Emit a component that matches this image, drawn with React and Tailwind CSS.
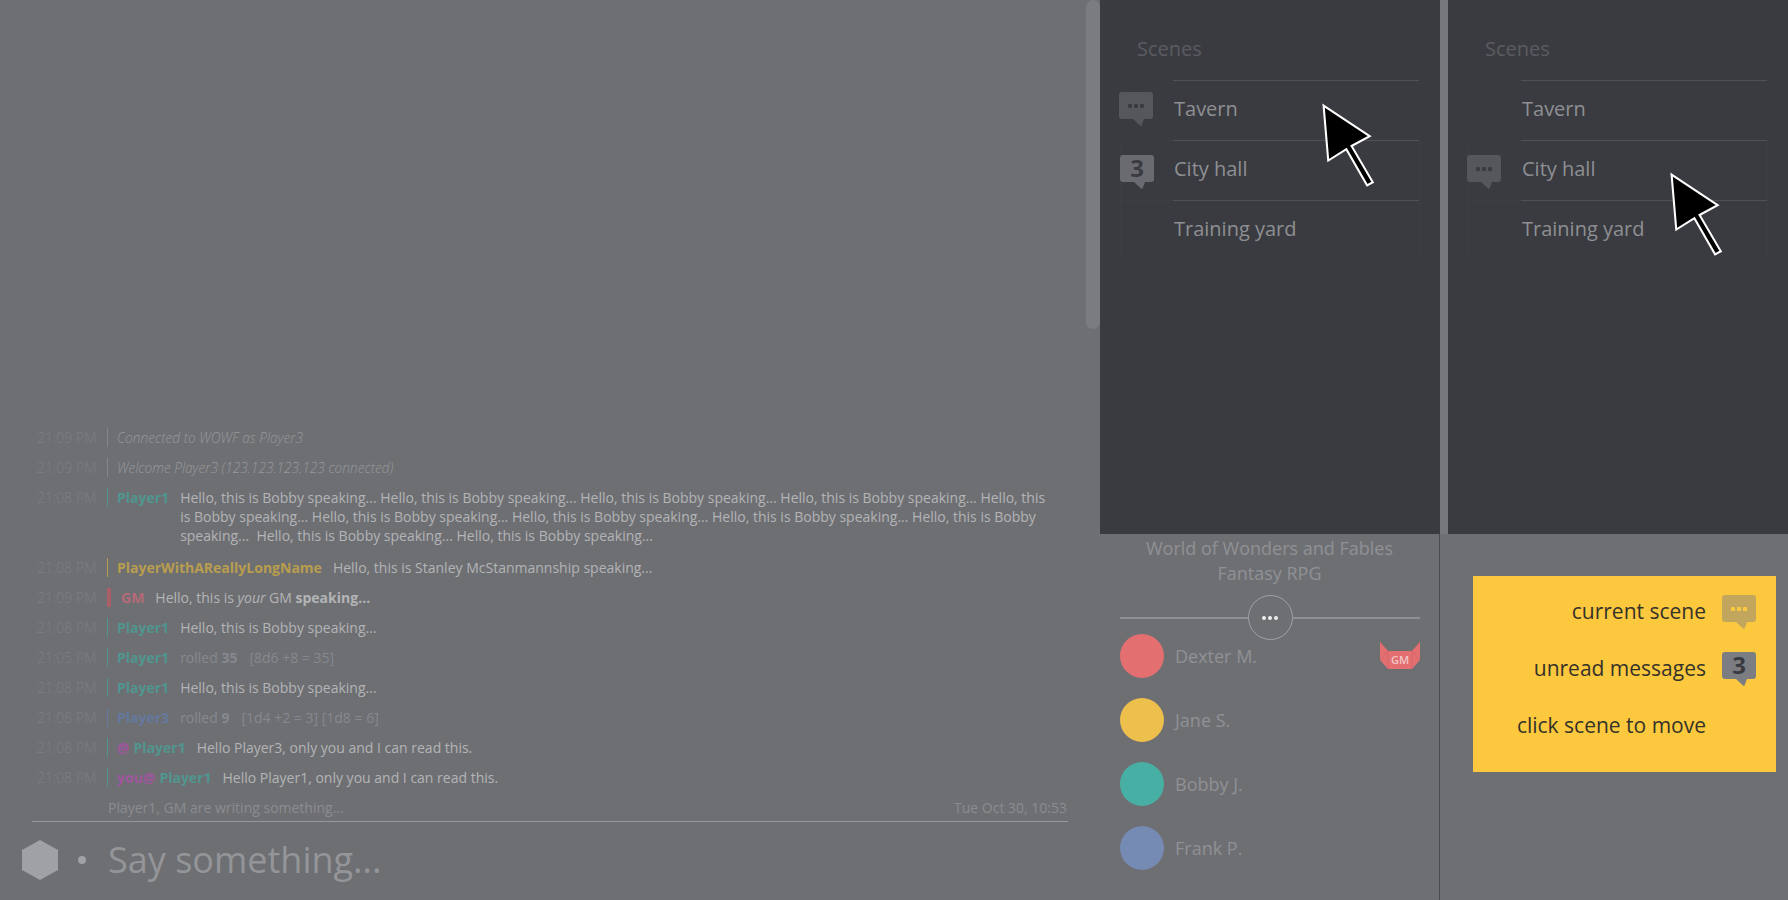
const PHRASE = 'Hello, this is Bobby speaking...'

const chatRows = [
  { time: '21:09 PM', bar: 'bg-[#85868a]', system: 'Connected to WOWF as Player3' },
  { time: '21:09 PM', bar: 'bg-[#85868a]', system: 'Welcome Player3 (123.123.123.123 connected)' },
  { time: '21:08 PM', bar: 'bg-[#4f9690]', name: 'Player1', nameColor: 'text-[#4f9690]', long: true },
  { time: '21:08 PM', bar: 'bg-[#b99d4f]', name: 'PlayerWithAReallyLongName', nameColor: 'text-[#b99d4f]', text: 'Hello, this is Stanley McStanmannship speaking...' },
  { time: '21:09 PM', gm: true },
  { time: '21:08 PM', bar: 'bg-[#4f9690]', name: 'Player1', nameColor: 'text-[#4f9690]', text: PHRASE },
  { time: '21:05 PM', bar: 'bg-[#4f9690]', name: 'Player1', nameColor: 'text-[#4f9690]', roll: '35', detail: '[8d6 +8 = 35]' },
  { time: '21:08 PM', bar: 'bg-[#4f9690]', name: 'Player1', nameColor: 'text-[#4f9690]', text: PHRASE },
  { time: '21:06 PM', bar: 'bg-[#64799e]', name: 'Player3', nameColor: 'text-[#64799e]', roll: '9', detail: '[1d4 +2 = 3] [1d8 = 6]' },
  { time: '21:08 PM', bar: 'bg-[#4f9690]', whisper: '@', name: 'Player1', nameColor: 'text-[#4f9690]', text: 'Hello Player3, only you and I can read this.' },
  { time: '21:08 PM', bar: 'bg-[#4f9690]', whisper: 'you@', name: 'Player1', nameColor: 'text-[#4f9690]', text: 'Hello Player1, only you and I can read this.' },
]

const players = [
  { name: 'Dexter M.', color: 'bg-[#e36f70]', gm: true },
  { name: 'Jane S.', color: 'bg-[#edbf4c]' },
  { name: 'Bobby J.', color: 'bg-[#48afa5]' },
  { name: 'Frank P.', color: 'bg-[#758bb3]' },
]

function Bubble({ fill, dots, children }) {
  return (
    <div className="relative w-[34px] h-[34px]">
      <svg width="34" height="34" viewBox="0 0 34 34" className="block">
        <path d="M3 0H31a3 3 0 0 1 3 3V24a3 3 0 0 1-3 3H25L22.5 33.5Q22 34 21 33.5L14 27H3a3 3 0 0 1-3-3V3a3 3 0 0 1 3-3Z" fill={fill} />
        {dots && (
          <g fill={dots}>
            <rect x="9" y="12" width="4" height="4" rx="1" />
            <rect x="15" y="12" width="4" height="4" rx="1" />
            <rect x="21" y="12" width="4" height="4" rx="1" />
          </g>
        )}
      </svg>
      {children && (
        <span className="absolute left-0 top-[-2px] w-[34px] text-center text-[24px] leading-[30px] font-bold text-[#3a3b40]">{children}</span>
      )}
    </div>
  )
}

function Cursor({ className }) {
  return (
    <svg width="56" height="87" viewBox="0 0 54 84" className={className}>
      <polygon points="1.5,3.5 46,33 28.5,42.5 49,77.5 43.5,80.5 23.5,45.5 6,56.5" fill="#000" stroke="#fff" strokeWidth="2" />
    </svg>
  )
}

function SceneRow({ label, icon, first }) {
  return (
    <div className={`flex h-[60px] ${first ? 'px-px' : 'border-x border-[#3d3e43]'}`}>
      <div className={`w-[52px] shrink-0 pt-[14px] ${first ? '' : 'border-t border-[#3d3e43]'}`}>{icon}</div>
      <div className="flex-1 border-t border-[#505156] pt-[15px] pl-[1px] text-[20px] leading-[26px] text-[#8e8f93]">{label}</div>
    </div>
  )
}

function ScenePanel({ scenes, cursorClass }) {
  return (
    <div className="relative h-[534px] w-[340px] bg-[#3a3b40] pr-[20px] pl-[20px]">
      <div className="h-[80px] pt-[36px] pl-[17px] text-[20px] leading-[26px] text-[#5a5b60]">Scenes</div>
      {scenes.map((s, i) => (
        <SceneRow key={s.label} label={s.label} icon={s.icon} first={i === 0} />
      ))}
      <Cursor className={cursorClass} />
    </div>
  )
}

function ChatRow({ row }) {
  let body
  if (row.system) {
    body = <span className="ml-[9px] italic font-light text-[13.7px] text-[#97989b]">{row.system}</span>
  } else if (row.gm) {
    body = (
      <>
        <span className="ml-[10px] font-bold text-[#b56a78]">GM</span>
        <span className="ml-[11px] text-[#b3b4b6]">Hello, this is <i>your</i> GM <b>speaking...</b></span>
      </>
    )
  } else {
    body = (
      <>
        <span className="ml-[9px] shrink-0 font-bold whitespace-nowrap">
          {row.whisper && <span className="text-[#a1559f] mr-[4px]">{row.whisper}</span>}
          <span className={row.nameColor}>{row.name}</span>
        </span>
        {row.long && (
          <p className="ml-[11px] w-[870px] text-[#b3b4b6]">
            {PHRASE} {PHRASE} {PHRASE} {PHRASE} {PHRASE} {PHRASE} {PHRASE} {PHRASE} {PHRASE}{'\u00a0 '}{PHRASE} {PHRASE}
          </p>
        )}
        {row.text && <span className="ml-[11px] text-[#b3b4b6]">{row.text}</span>}
        {row.roll && (
          <span className="ml-[11px] text-[#85898f]">
            rolled <b>{row.roll}</b>
            <span className="ml-[12px]">{row.detail}</span>
          </span>
        )}
      </>
    )
  }
  return (
    <div className={`flex items-start text-[14px] leading-[19px] ${row.long ? 'mb-[13px]' : 'mb-[11px]'}`}>
      <span className="w-[70px] shrink-0 font-light text-[14px] text-[#7d7e82]">{row.time}</span>
      {row.gm
        ? <span className="w-[4px] h-[19px] shrink-0 bg-[#a85f69]" />
        : <span className={`w-px h-[19px] shrink-0 ${row.bar}`} />}
      {body}
    </div>
  )
}

export default function App() {
  const tavernIcon = <Bubble fill="#56575c" dots="#3a3b40" />
  const unread = <div className="-ml-[1px]"><Bubble fill="#6a6b70">3</Bubble></div>

  return (
    <div className="flex h-[900px] w-[1788px] overflow-hidden bg-[#6e6f73] font-['Open_Sans',sans-serif]">
      <div className="flex w-[1086px] flex-col justify-end pl-[32px] pr-[18px]">
        <div className="pl-[5px]">
          {chatRows.map((row, i) => <ChatRow key={i} row={row} />)}
          <div className="flex justify-between pl-[71px] pr-[1px] text-[14px] leading-[19px] text-[#8b8c90]">
            <span>Player1, GM are writing something...</span>
            <span>Tue Oct 30, 10:53</span>
          </div>
        </div>
        <div className="mt-[4px] flex h-[79px] items-center border-t border-[#97989b] pb-[3px]">
          <svg width="36" height="40" viewBox="0 0 36 40" className="-ml-[10px] shrink-0">
            <polygon points="18,0 36,10 36,30 18,40 0,30 0,10" fill="#a0a1a4" />
          </svg>
          <span className="ml-[20px] h-[8px] w-[8px] shrink-0 rounded-full bg-[#a0a1a4]" />
          <span className="ml-[22px] text-[36px] leading-[48px] text-[#949598]">Say something...</span>
        </div>
      </div>

      <div className="w-[14px] shrink-0">
        <div className="h-[329px] rounded-lg bg-[#7b7c80]" />
      </div>

      <div className="w-[340px] shrink-0">
        <ScenePanel
          cursorClass="absolute left-[222px] top-[102px]"
          scenes={[
            { label: 'Tavern', icon: <div className="-ml-[2px] -mt-[2px]">{tavernIcon}</div> },
            { label: 'City hall', icon: unread },
            { label: 'Training yard' },
          ]}
        />
        <div className="h-[366px] border-r border-[#4a4b50]">
          <div className="pt-[2px] text-center text-[18px] leading-[25px] text-[#909195]">
            <div>World of Wonders and Fables</div>
            <div>Fantasy RPG</div>
          </div>
          <div className="ml-[20px] mr-[19px] mt-[9px] flex items-center">
            <div className="h-[2px] flex-1 bg-[#8f9093]" />
            <div className="flex h-[45px] w-[45px] items-center justify-center gap-[2px] rounded-full border border-[#a0a1a3]">
              <span className="h-[4px] w-[4px] rounded-full bg-[#eeeeee]" />
              <span className="h-[4px] w-[4px] rounded-full bg-[#eeeeee]" />
              <span className="h-[4px] w-[4px] rounded-full bg-[#eeeeee]" />
            </div>
            <div className="h-[2px] flex-1 bg-[#8f9093]" />
          </div>
          <div className="ml-[20px] mr-[19px] -mt-[6px] flex flex-col gap-[20px]">
            {players.map(p => (
              <div key={p.name} className="flex h-[44px] items-center">
                <span className={`h-[44px] w-[44px] rounded-full ${p.color}`} />
                <span className="ml-[11px] flex-1 text-[18px] text-[#909195]">{p.name}</span>
                {p.gm && (
                  <div className="relative -mt-[2px] h-[27px] w-[40px]">
                    <svg width="40" height="27" viewBox="0 0 40 27" className="block">
                      <polygon points="0,0 8,9 32,9 40,0 40,18 32,27 8,27 0,18" fill="#e36f70" />
                      <path d="M0 0L8 9V27M40 0L32 9V27M0 18L8 9M40 18L32 9" fill="none" stroke="#c96365" strokeWidth="0.6" />
                    </svg>
                    <span className="absolute left-0 top-[9px] w-[40px] text-center text-[11px] leading-[18px] font-semibold text-[#f3c6c6]">GM</span>
                  </div>
                )}
              </div>
            ))}
          </div>
        </div>
      </div>

      <div className="w-[8px] shrink-0">
        <div className="h-[534px] bg-[#77787c]" />
      </div>

      <div className="w-[340px] shrink-0">
        <ScenePanel
          cursorClass="absolute left-[222px] top-[171px]"
          scenes={[
            { label: 'Tavern', icon: null },
            { label: 'City hall', icon: <div className="-ml-[2px]">{tavernIcon}</div> },
            { label: 'Training yard' },
          ]}
        />
        <div className="ml-[25px] mt-[42px] h-[196px] w-[303px] bg-[#fcc83d] pr-[20px] pt-[7px] text-[21px] text-[#35322a]">
          <div className="flex h-[57px] items-center justify-end gap-[16px]">
            <span>current scene</span>
            <Bubble fill="#c3a65e" dots="#fcc83d" />
          </div>
          <div className="flex h-[57px] items-center justify-end gap-[16px]">
            <span>unread messages</span>
            <Bubble fill="#7c7d82">3</Bubble>
          </div>
          <div className="flex h-[57px] items-center justify-end">
            <span className="mr-[50px]">click scene to move</span>
          </div>
        </div>
      </div>
    </div>
  )
}
